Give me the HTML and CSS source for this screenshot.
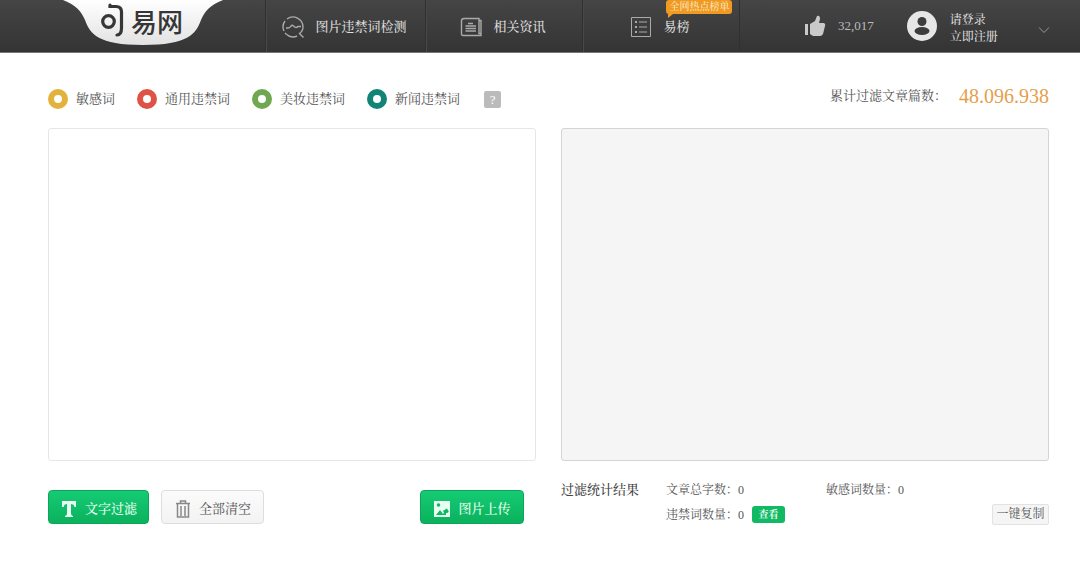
FILE: index.html
```html
<!DOCTYPE html>
<html lang="zh-CN">
<head>
<meta charset="utf-8">
<meta name="viewport" content="width=device-width, initial-scale=1">
<title>句易网</title>
<link rel="stylesheet" href="styles.css">
</head>
<body>
<header class="topbar">
  <div class="brand">
    <a class="logo" href="#" aria-label="句易网">
      <svg class="logo-shape" viewBox="0 0 160 46" aria-hidden="true">
        <defs><linearGradient id="plate" x1="0" y1="0" x2="0" y2="1"><stop offset="0" stop-color="#fff"/><stop offset="1" stop-color="#e2e2e2"/></linearGradient></defs>
        <path fill="url(#plate)" d="M0 0C13 5 18 11 22 20C27 34 35 45 80 45C125 45 133 34 138 20C142 11 147 5 160 0Z"/>
        <g fill="none" stroke="#363636" stroke-width="3.2" stroke-linecap="round"><circle cx="45.500" cy="21.500" r="5.800"/><path d="M47 5V6.500H53Q58.500 6.500 58.500 12V28Q58.500 35 54 35"/></g>
      </svg>
      <span class="logo-text">易网</span>
    </a>
  </div>
  <nav class="nav">
    <a class="nav-item" href="#">
      <svg class="icon-lg" viewBox="0 0 24 24" aria-hidden="true"><path d="M3 16A10 10 0 0 1 4 6M6 4A10 10 0 0 1 22 12Q22 16 18.500 18.500L22.500 22.500M4 18Q10 24 16 21M5 13H7Q9 13 10 11Q11 9.500 12.500 11T15 12.500T17 11.500H20"/></svg>
      <span>图片违禁词检测</span>
    </a>
    <a class="nav-item" href="#">
      <svg class="icon-lg" viewBox="0 0 24 24" aria-hidden="true"><path d="M5 3.500H20V18.500H22V20.500H4Q2.500 20.500 2.500 19V6Q2.500 3.500 5 3.500ZM20 5.500H22V20M9 8.500H14M6.500 11H17M6.500 13.500H17M6.500 16H17"/></svg>
      <span>相关资讯</span>
    </a>
    <a class="nav-item" href="#">
      <svg class="icon-lg" viewBox="0 0 24 24" aria-hidden="true"><path stroke-width="1" d="M2.500 2.500H21.500V21.500H2.500ZM10 7H18M10 12H18M10 17H18"/><path stroke-width="2" d="M6 7H8M6 12H8M6 17H8"/></svg>
      <span class="ranked">易榜<span class="badge">全网热点榜单</span></span>
    </a>
  </nav>
  <div class="account">
    <button class="likes" type="button">
      <svg class="thumb" viewBox="0 0 22 22" aria-hidden="true"><path d="M1 9H4V20H1ZM6 9L11 6L13 1Q16 0 16 4L15 8H20Q22 9 21 11L19 19Q18 21 16 21H9L6 19Z"/></svg>
      <span>32,017</span>
    </button>
    <svg class="avatar" viewBox="0 0 30 30" aria-hidden="true"><circle cx="15" cy="15" r="15" fill="#e6e6e6"/><circle cx="15" cy="10.500" r="4.500" fill="#3c3c3c"/><ellipse cx="15" cy="20" rx="7.500" ry="4" fill="#3c3c3c"/></svg>
    <div class="auth"><a href="#">请登录</a><a href="#">立即注册</a></div>
    <button class="more" type="button" aria-label="更多"><svg viewBox="0 0 12 8" aria-hidden="true"><path d="M1 1.500L6 6.500L11 1.500"/></svg></button>
  </div>
</header>

<main class="page">
  <div class="summary">
    <ul class="legend">
      <li><i class="ring yellow"></i>敏感词</li>
      <li><i class="ring red"></i>通用违禁词</li>
      <li><i class="ring green"></i>美妆违禁词</li>
      <li><i class="ring teal"></i>新闻违禁词</li>
      <li><button class="help" type="button" aria-label="帮助">?</button></li>
    </ul>
    <p class="total">累计过滤文章篇数：<strong>48.096.938</strong></p>
  </div>

  <div class="columns">
    <section class="column">
      <textarea class="panel" aria-label="待过滤文字"></textarea>
      <div class="actions">
        <button class="btn primary" type="button"><svg viewBox="0 0 18 18" aria-hidden="true"><path fill="currentColor" d="M2 1H16V7H14.500Q14 4 11 4V13.500Q11 15.500 13 16V17H5V16Q7 15.500 7 13.500V4Q4 4 3.500 7H2Z"/></svg>文字过滤</button>
        <button class="btn plain" type="button"><svg viewBox="0 0 18 18" aria-hidden="true"><path fill="none" stroke="#888" stroke-width="1.500" d="M2 3.500H16M6.500 3V1H11.500V3M3.500 4V17H14.500V4M7 6V16M11 6V16"/></svg>全部清空</button>
        <button class="btn primary upload" type="button"><svg viewBox="0 0 18 18" aria-hidden="true"><path fill="currentColor" d="M1 1H17V17H1Z"/><circle cx="5.500" cy="5" r="1.800" fill="#0db863"/><path fill="#0db863" d="M3 15L7 10L10 14L11 13Q9 10 12 10Q13 7 15 10Q17 13 13 13V15Z"/></svg>图片上传</button>
      </div>
    </section>
    <section class="column">
      <textarea class="panel result" aria-label="过滤结果" readonly></textarea>
      <div class="stats">
        <h2>过滤统计结果</h2>
        <span>文章总字数：0</span>
        <span>敏感词数量：0</span>
        <span class="second">违禁词数量：0<button class="view" type="button">查看</button></span>
        <button class="copy" type="button">一键复制</button>
      </div>
    </section>
  </div>
</main>
</body>
</html>
```
FILE: styles.css
```css
* { box-sizing: border-box; }

body {
  margin: 0;
  background: #fff;
  color: #555;
  font: 13px/20px "Liberation Serif", "Noto Serif CJK SC", "Noto Sans CJK SC", serif;
}

button, textarea { font: inherit; color: inherit; }
button { padding: 0; border: 0; background: none; cursor: pointer; white-space: nowrap; }
a { color: inherit; text-decoration: none; }

.topbar {
  display: flex;
  height: 53px;
  border-bottom: 1px solid #777;
  background: linear-gradient(#454545, #343434);
  color: #ddd;
}

.brand { flex: 0 0 265px; padding-left: 63px; }
.logo { position: relative; display: block; width: 160px; height: 46px; }
.logo-shape { display: block; width: 160px; height: 46px; }
.logo-text {
  position: absolute;
  left: 68px;
  top: 6px;
  color: #363636;
  font: 500 26px/30px "Noto Sans CJK SC", sans-serif;
}

.nav { display: flex; flex: 0 1 475px; border-left: 1px solid #303030; }
.nav-item {
  display: flex;
  flex: 1 1 0;
  align-items: center;
  justify-content: center;
  gap: 10px;
  padding: 2px 4px 0 0;
  border-left: 1px solid #484848;
  border-right: 1px solid #303030;
  font-weight: 500;
  white-space: nowrap;
}
.nav-item:first-child { flex: 0 0 160px; }
.icon-lg { width: 24px; height: 24px; fill: none; stroke: #aaa; stroke-width: 1.4; }
.ranked { position: relative; }
.badge {
  position: absolute;
  left: 3px;
  bottom: 23px;
  padding: 0 3px;
  border-radius: 3px;
  background: #f09a24;
  color: #fff0cf;
  font-size: 10px;
  font-weight: 400;
  line-height: 14px;
}
.badge::after {
  content: "";
  position: absolute;
  left: 2px;
  top: 100%;
  border-top: 4px solid #f09a24;
  border-right: 5px solid transparent;
}

.account { display: flex; flex: 1; align-items: center; padding: 0 30px 0 64px; }
.likes { display: flex; align-items: center; gap: 12px; margin-right: 33px; color: #bbb; }
.thumb { width: 22px; height: 22px; fill: #c9c9c9; }
.avatar { width: 30px; height: 30px; margin-right: 13px; }
.auth { display: grid; padding-top: 6px; font-size: 12px; font-weight: 500; line-height: 17px; white-space: nowrap; }
.more { margin-left: auto; padding-top: 8px; }
.more svg { display: block; width: 12px; height: 8px; fill: none; stroke: #999; }

.page { padding: 32px 31px 38px 48px; }
.summary { display: flex; align-items: flex-start; justify-content: space-between; height: 43px; }
.legend { display: flex; gap: 22px; margin: 0; padding: 3px 0 0; list-style: none; white-space: nowrap; }
.legend li { display: flex; align-items: center; gap: 8px; line-height: 22px; }
.ring { width: 20px; height: 20px; border: 6px solid; border-radius: 50%; }
.yellow { border-color: #e2b23c; }
.red { border-color: #df5347; }
.green { border-color: #6fa850; }
.teal { border-color: #128477; }
.help {
  width: 17px;
  height: 17px;
  margin-left: 2px;
  border-radius: 2px;
  background: #bbb;
  color: #fff;
  line-height: 17px;
}
.total { display: flex; gap: 12px; margin: 0; line-height: 22px; white-space: nowrap; }
.total strong { color: #e5a04c; font-size: 20px; font-weight: 400; }

.columns { display: grid; grid-template-columns: 1fr 1fr; gap: 25px; }
.column { min-width: 0; }
.panel {
  display: block;
  width: 100%;
  height: 333px;
  padding: 12px;
  border: 1px solid #e6e6e6;
  border-radius: 3px;
  background: #fff;
  resize: none;
}
.result { border-color: #d4d4d4; background: #f5f5f5; }

.actions { display: flex; gap: 12px; padding: 29px 12px 0 0; }
.btn {
  display: flex;
  align-items: center;
  justify-content: center;
  gap: 7px;
  height: 34px;
  padding: 4px 10px 0;
  border-radius: 4px;
}
.btn svg { width: 18px; height: 18px; }
.primary {
  min-width: 101px;
  border: 1px solid #0ba65a;
  background: linear-gradient(#15cb74, #0bb15d);
  color: #e9fff2;
  font-weight: 500;
}
.plain { min-width: 103px; border: 1px solid #ddd; background: linear-gradient(#fbfbfb, #f3f3f3); }
.upload { min-width: 104px; margin-left: auto; }

.stats {
  display: grid;
  grid-template-columns: 105px 160px 1fr;
  align-items: center;
  row-gap: 4px;
  padding-top: 19px;
  font-size: 12px;
  white-space: nowrap;
}
.stats h2 { margin: 0; color: #444; font-size: 13px; font-weight: 500; }
.second { display: flex; grid-column: 2; align-items: center; }
.view {
  width: 33px;
  height: 17px;
  margin-left: 8px;
  border-radius: 3px;
  background: #12b965;
  color: #e9fff2;
  font-size: 10px;
  font-weight: 700;
  line-height: 17px;
}
.copy {
  justify-self: end;
  width: 57px;
  height: 21px;
  border: 1px solid #e2e2e2;
  border-radius: 2px;
  background: #f5f5f5;
  line-height: 19px;
}
```
